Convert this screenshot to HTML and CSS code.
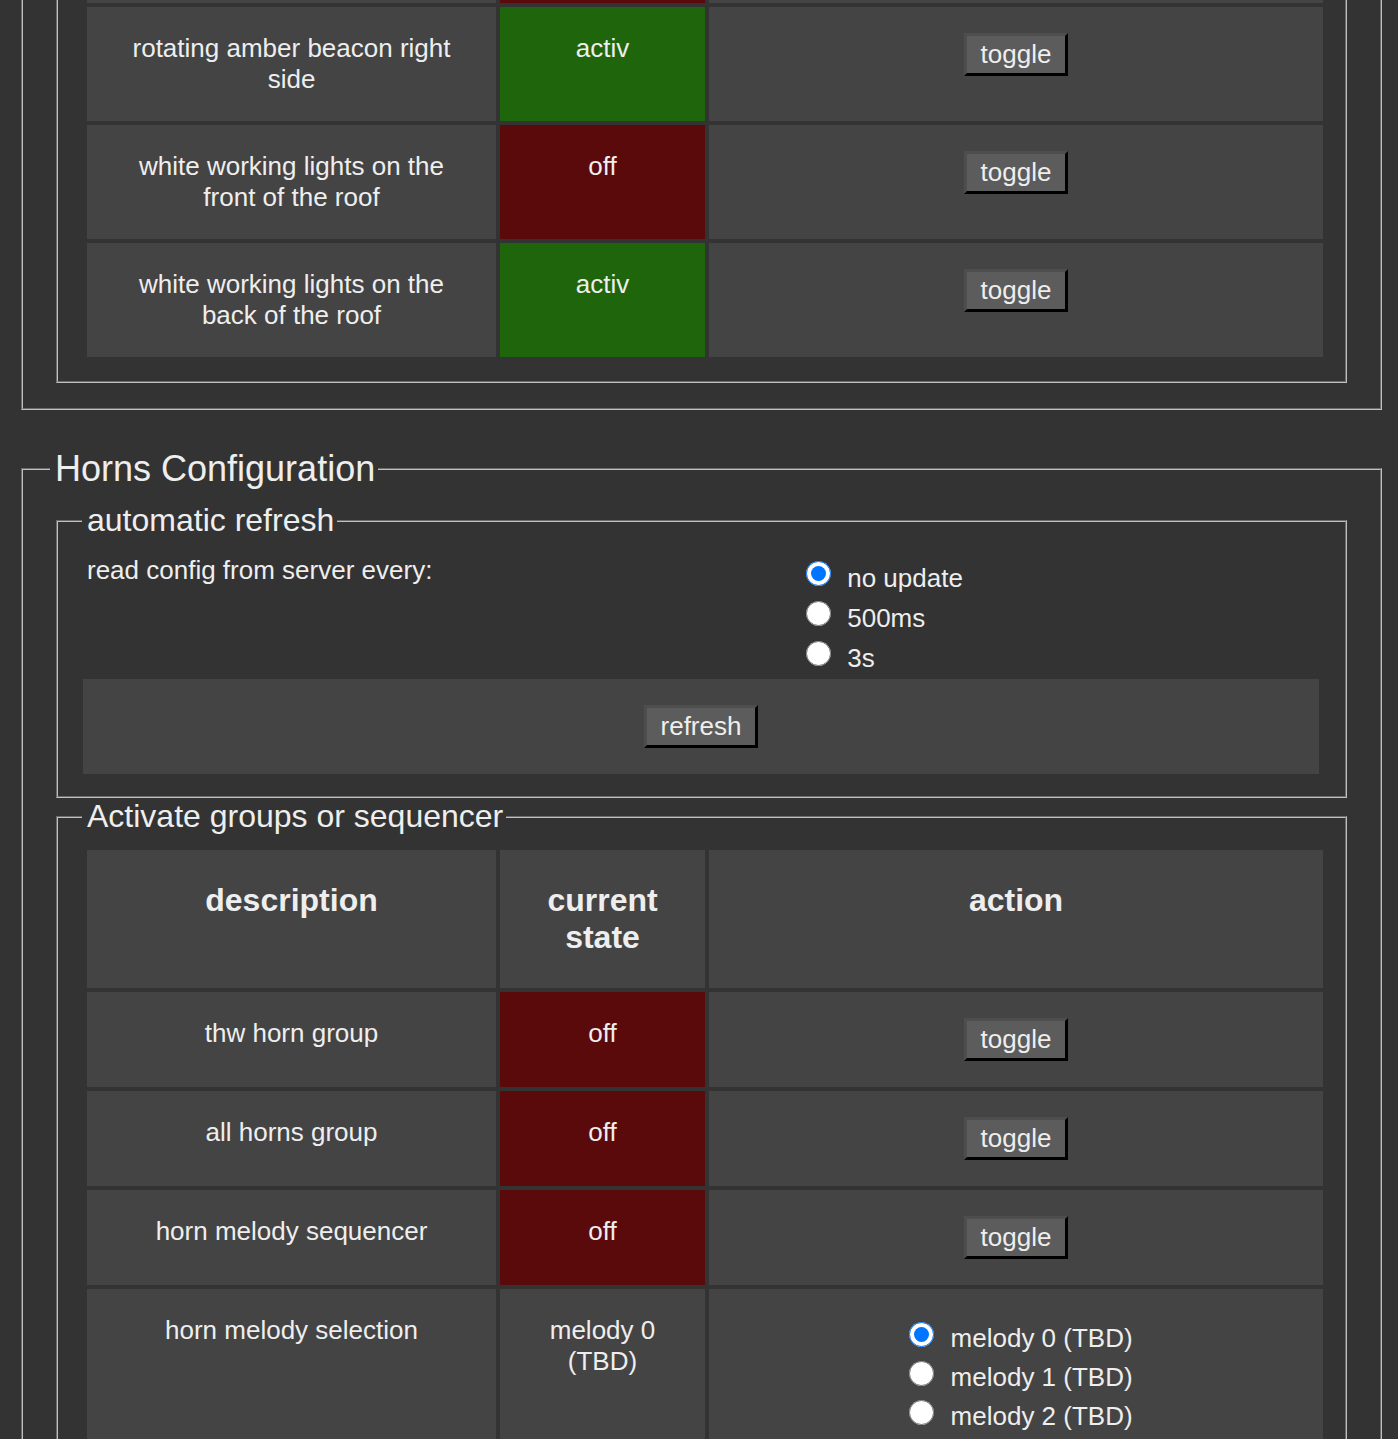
FILE: index.html
```html
<!DOCTYPE html>
<html lang="en">
<head>
<meta charset="utf-8">
<title>Vehicle Configuration</title>
<link rel="stylesheet" href="styles.css">
</head>
<body>
<div class="page">
  <fieldset class="section">
    <legend>Lights Configuration</legend>
    <fieldset class="sub">
      <legend>Activate lights</legend>
      <table class="grid">
        <colgroup><col class="c1"><col class="c2"><col class="c3"></colgroup>
        <tr><th>description</th><th>current state</th><th>action</th></tr>
        <tr><td>rotating amber beacon left side</td><td class="off">off</td><td><button class="btn">toggle</button></td></tr>
        <tr><td>rotating amber beacon right side</td><td class="on">activ</td><td><button class="btn">toggle</button></td></tr>
        <tr><td>white working lights on the front of the roof</td><td class="off">off</td><td><button class="btn">toggle</button></td></tr>
        <tr><td>white working lights on the back of the roof</td><td class="on">activ</td><td><button class="btn">toggle</button></td></tr>
      </table>
    </fieldset>
  </fieldset>

  <fieldset class="section">
    <legend>Horns Configuration</legend>
    <fieldset class="sub">
      <legend>automatic refresh</legend>
      <div class="auto-row">
        <div class="auto-label">read config from server every:</div>
        <div class="auto-opts">
          <div class="opt"><input class="radio" type="radio" name="upd" checked> no update</div>
          <div class="opt"><input class="radio" type="radio" name="upd"> 500ms</div>
          <div class="opt"><input class="radio" type="radio" name="upd"> 3s</div>
        </div>
      </div>
      <div class="refresh-bar"><button class="btn">refresh</button></div>
    </fieldset>
    <fieldset class="sub">
      <legend>Activate groups or sequencer</legend>
      <table class="grid">
        <colgroup><col class="c1"><col class="c2"><col class="c3"></colgroup>
        <tr><th>description</th><th>current state</th><th>action</th></tr>
        <tr><td>thw horn group</td><td class="off">off</td><td><button class="btn">toggle</button></td></tr>
        <tr><td>all horns group</td><td class="off">off</td><td><button class="btn">toggle</button></td></tr>
        <tr><td>horn melody sequencer</td><td class="off">off</td><td><button class="btn">toggle</button></td></tr>
        <tr>
          <td>horn melody selection</td>
          <td>melody 0 (TBD)</td>
          <td>
            <div class="melody">
              <div class="mopt"><input class="radio" type="radio" name="mel" checked> melody 0 (TBD)</div>
              <div class="mopt"><input class="radio" type="radio" name="mel"> melody 1 (TBD)</div>
              <div class="mopt"><input class="radio" type="radio" name="mel"> melody 2 (TBD)</div>
            </div>
          </td>
        </tr>
      </table>
    </fieldset>
  </fieldset>
</div>
</body>
</html>
```
FILE: styles.css
```css
html, body {
  margin: 0;
  background: #333333;
}

body {
  color: #eeeeee;
  font-family: "Liberation Sans", Arial, sans-serif;
  font-size: 26px;
  line-height: 30px;
}

.page {
  margin-top: -340px;
  padding: 0 16px 0 21px;
}

.section {
  border: 2px groove #c0c0c0;
  margin: 0 0 38px 0;
  padding: 13px 27px 25px 27px;
  min-width: 0;
}

.section > legend {
  font-size: 36px;
  line-height: 41px;
  padding: 0 3px 0 5px;
}

.sub {
  border: 2px groove #c0c0c0;
  margin: 0 6px;
  padding: 11px 24px 20px 24px;
  min-width: 0;
}

.sub > legend {
  font-size: 32px;
  line-height: 37px;
  padding: 0 3px 0 5px;
}

.grid {
  border-spacing: 4px;
  table-layout: fixed;
  width: calc(100% + 5px);
  margin-left: 1px;
}

.c1 { width: 409px; }
.c2 { width: 205px; }

.grid th {
  background: #444444;
  padding: 32px;
  font-size: 32px;
  line-height: 37px;
  font-weight: bold;
  text-align: center;
  vertical-align: top;
}

.grid td {
  background: #444444;
  padding: 26px;
  line-height: 31px;
  text-align: center;
  vertical-align: top;
}

.grid td.on { background: #1f650c; }
.grid td.off { background: #5a0a0b; }

.btn {
  font-family: "Liberation Sans", Arial, sans-serif;
  font-size: 26px;
  line-height: 30px;
  color: #eeeeee;
  background: #5c5c5c;
  border: 3px solid;
  border-color: #4e4e4e #000000 #000000 #4e4e4e;
  padding: 3px 14px 4px 14px;
  margin: 0;
  vertical-align: top;
}

.auto-row {
  display: grid;
  grid-template-columns: 724px 1fr;
}

.auto-label {
  padding: 5px 0 0 5px;
  line-height: 30px;
}

.auto-opts {
  padding: 8px 0 1px 0;
}

.opt {
  line-height: 40px;
}

.radio {
  width: 25px;
  height: 25px;
  margin: 3px 9px 0 0;
  vertical-align: top;
}

.refresh-bar {
  background: #444444;
  padding: 26px;
  text-align: center;
  margin: 0 2px 2px 1px;
}

.melody {
  display: inline-block;
  text-align: left;
  margin: 4px 0 0 10px;
}

.mopt {
  line-height: 39px;
}

.mopt .radio {
  margin-top: 3px;
}
```
